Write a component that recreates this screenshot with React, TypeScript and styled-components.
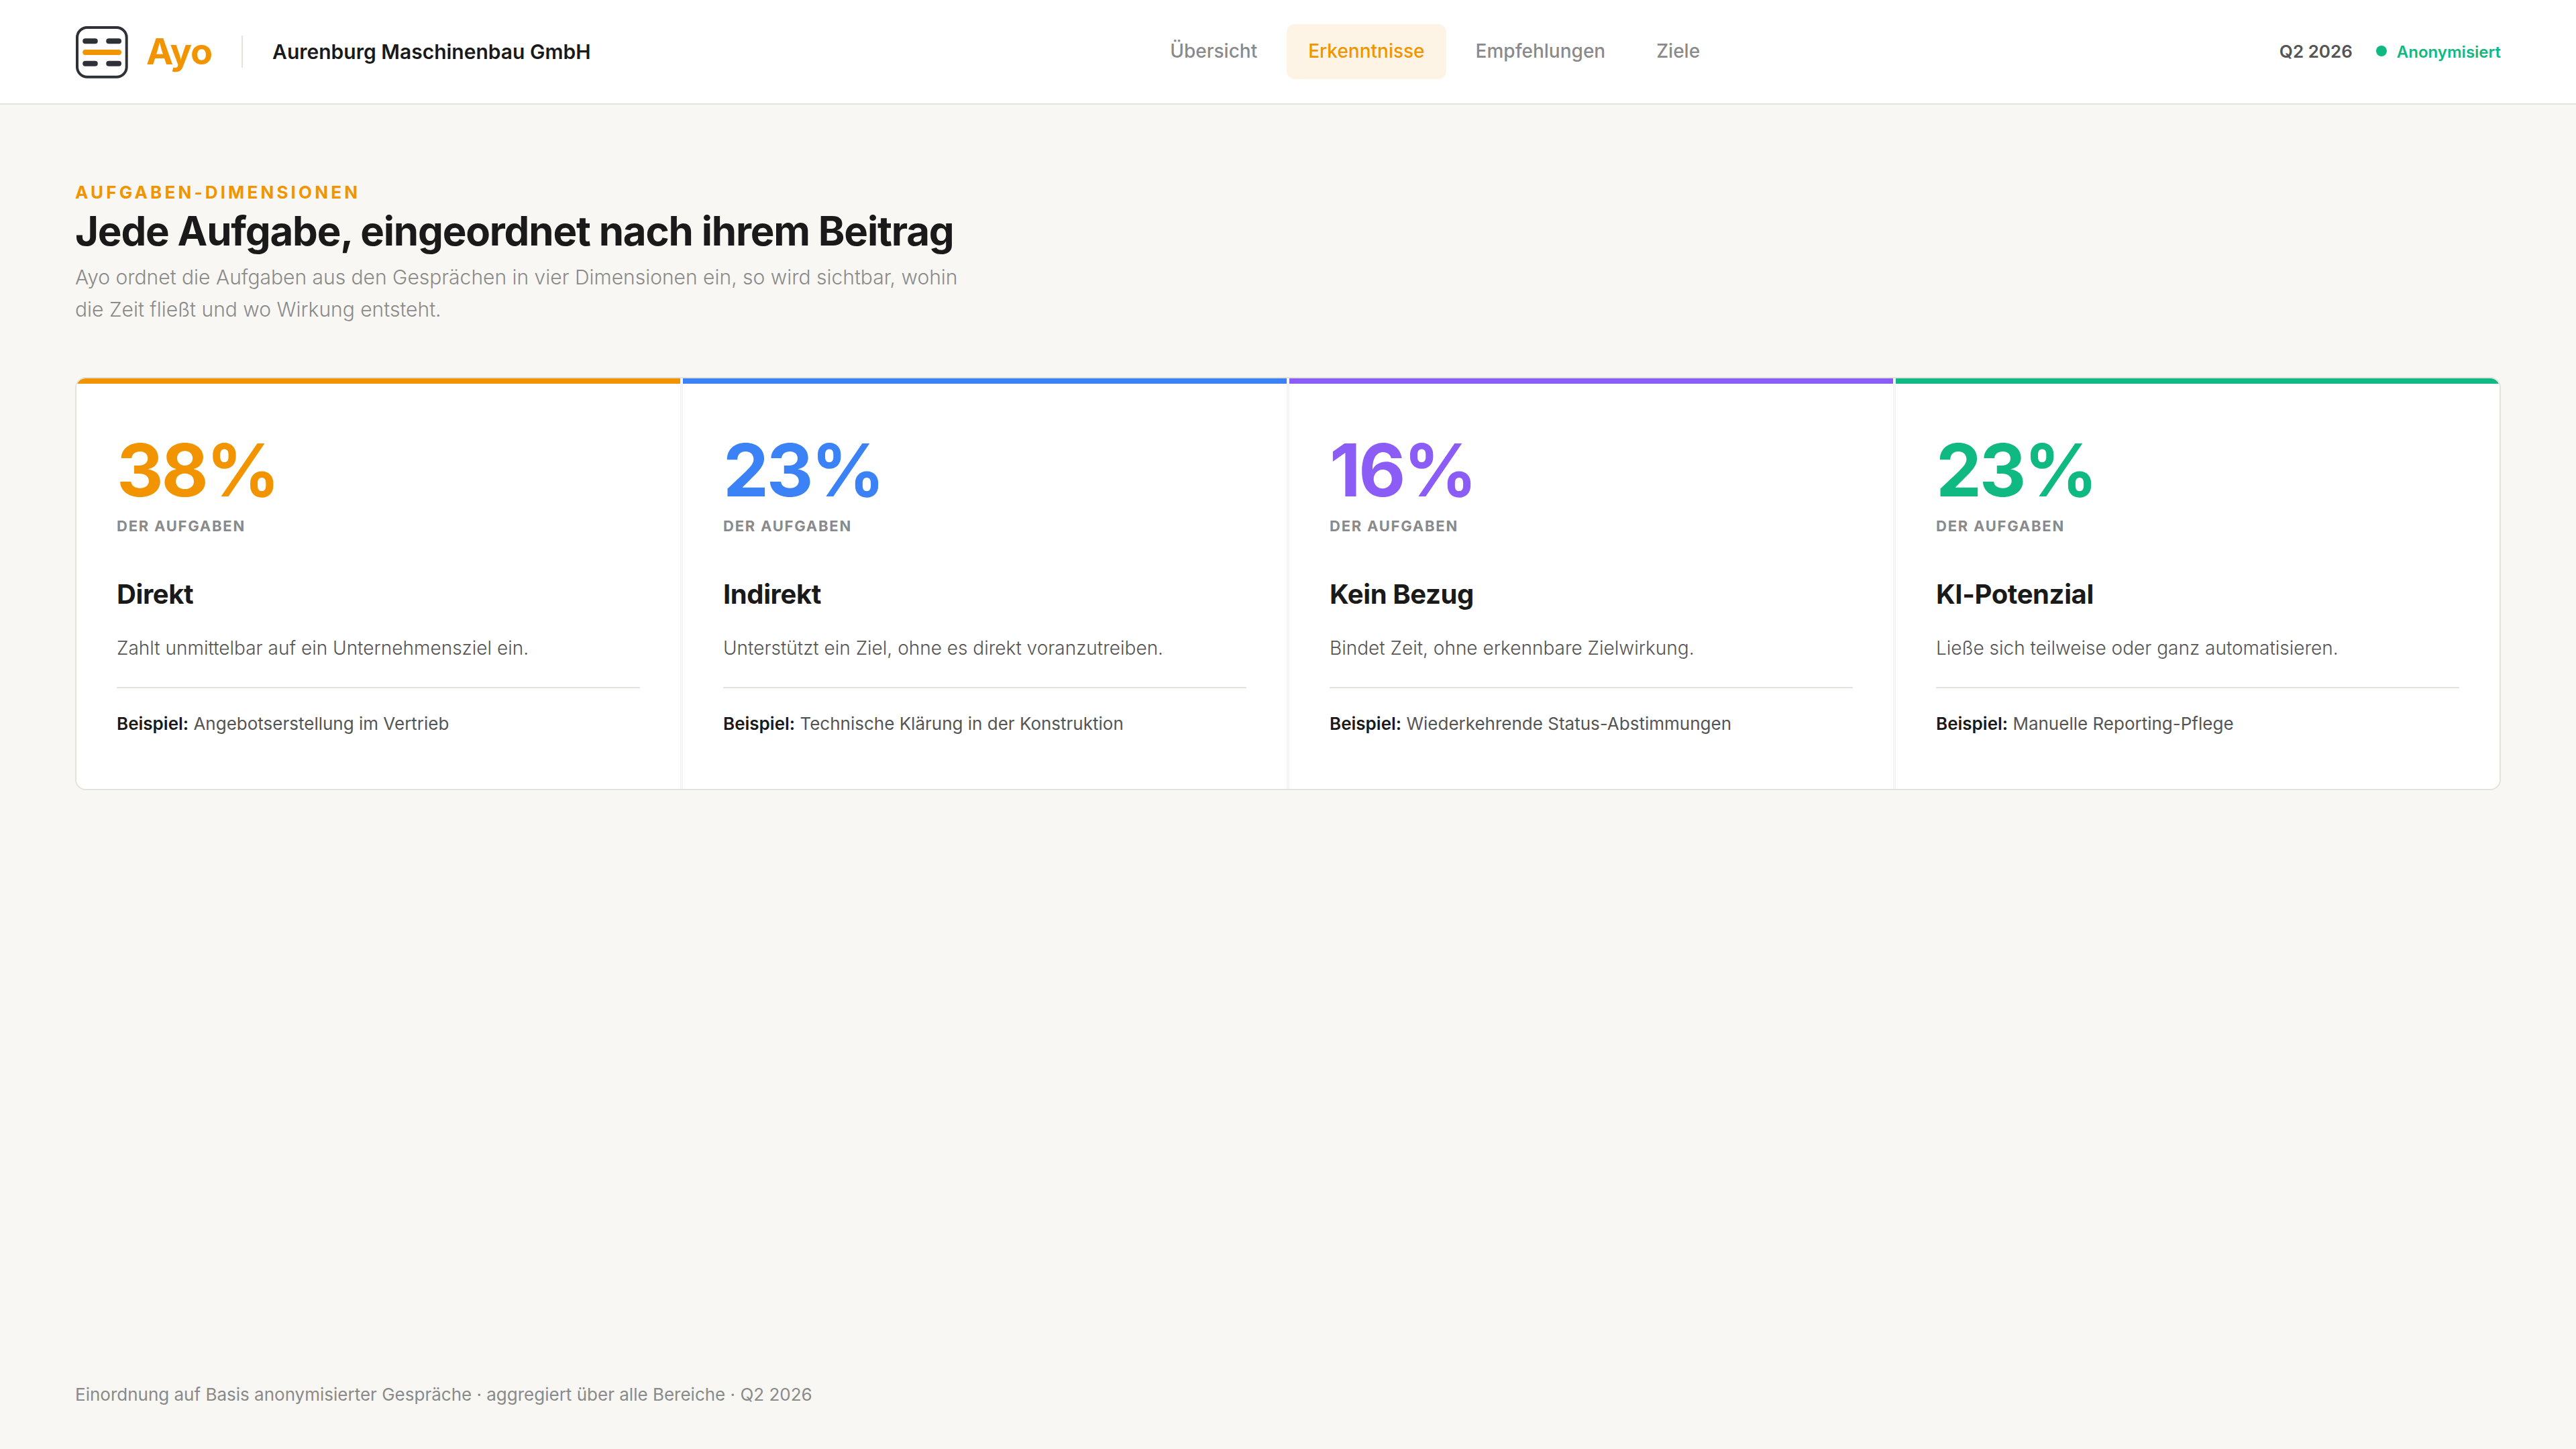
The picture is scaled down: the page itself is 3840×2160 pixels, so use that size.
import React from "react";
import styled, { createGlobalStyle } from "styled-components";

const GlobalStyle = createGlobalStyle`
  *, *::before, *::after { box-sizing: border-box; }
  body { margin: 0; background: #f8f7f3; }
`;

const Page = styled.div`
  display: flex;
  flex-direction: column;
  width: 100%;
  min-height: 100vh;
  background: #f8f7f3;
  color: #1a1a1a;
  font-family: Inter, "Liberation Sans", sans-serif;
  font-size: 28px;
  line-height: 1.5;
`;

const TopBar = styled.header`
  display: flex;
  align-items: center;
  justify-content: space-between;
  height: 156px;
  padding: 0 112px;
  background: #ffffff;
  border-bottom: 2px solid #e3e3dd;
`;

const Brand = styled.div`
  display: flex;
  align-items: center;
`;

const LogoMark = styled.svg`
  display: block;
  width: 80px;
  height: 80px;
`;

const Wordmark = styled.span`
  margin-left: 26px;
  font-size: 54px;
  line-height: 1;
  font-weight: 700;
  letter-spacing: -0.02em;
  color: #f29400;
`;

const BrandDivider = styled.span`
  width: 2px;
  height: 48px;
  margin: 0 44px;
  background: #e3e3dd;
`;

const Company = styled.span`
  font-size: 30px;
  font-weight: 600;
`;

const Nav = styled.nav`
  display: flex;
  gap: 12px;
`;

const NavItem = styled.a<{ $active?: boolean }>`
  padding: 19px 32px 21px;
  border-radius: 12px;
  font-size: 28px;
  font-weight: 500;
  color: ${(p) => (p.$active ? "#f29400" : "#8a8a8a")};
  background: ${(p) => (p.$active ? "#fef4e6" : "transparent")};
`;

const Meta = styled.div`
  display: flex;
  align-items: center;
  gap: 35px;
`;

const Period = styled.span`
  padding-bottom: 1px;
  font-size: 26px;
  font-weight: 600;
  color: #555555;
`;

const Status = styled.span`
  display: flex;
  align-items: center;
  gap: 15px;
  padding-top: 2px;
  font-size: 24px;
  font-weight: 600;
  color: #10b981;
`;

const StatusDot = styled.i`
  width: 16px;
  height: 16px;
  margin-bottom: 4px;
  border-radius: 50%;
  background: #10b981;
`;

const Content = styled.main`
  flex: 1;
  padding: 112px 112px 0;
`;

const Eyebrow = styled.div`
  font-size: 26px;
  line-height: 37px;
  font-weight: 700;
  letter-spacing: 0.16em;
  text-transform: uppercase;
  color: #f29400;
`;

const Title = styled.h1`
  margin: 0;
  font-size: 60px;
  line-height: 78px;
  font-weight: 700;
  letter-spacing: -0.02em;
`;

const Lead = styled.p`
  width: 1360px;
  margin: 6px 0 0;
  font-size: 30px;
  line-height: 48px;
  font-weight: 300;
  color: #8a8a8a;
`;

const Grid = styled.section`
  display: grid;
  grid-template-columns: repeat(4, 1fr);
  gap: 4px;
  margin-top: 77px;
  border: 2px solid #e3e3dd;
  border-radius: 16px;
  overflow: hidden;
  background: #f5f5f3;
`;

const Card = styled.article<{ $accent: string }>`
  height: 612px;
  padding: 75px 60px 0;
  border-top: 8px solid ${(p) => p.$accent};
  background: #ffffff;
`;

const Share = styled.div<{ $accent: string }>`
  font-size: 108px;
  line-height: 107px;
  font-weight: 700;
  letter-spacing: -0.03em;
  color: ${(p) => p.$accent};
`;

const ShareLabel = styled.div`
  margin-top: 13px;
  font-size: 22px;
  line-height: 34px;
  font-weight: 700;
  letter-spacing: 0.08em;
  text-transform: uppercase;
  color: #8a8a8a;
`;

const CardTitle = styled.h2`
  margin: 55px 0 0;
  font-size: 40px;
  line-height: 59px;
  font-weight: 700;
  letter-spacing: -0.01em;
`;

const Description = styled.p`
  margin: 29px 0 0;
  font-size: 28px;
  line-height: 44px;
  font-weight: 300;
  color: #555555;
`;

const Example = styled.p`
  margin: 36px 0 0;
  padding-top: 32px;
  border-top: 2px solid #e3e3dd;
  font-size: 26px;
  line-height: 41px;
  color: #555555;

  strong {
    font-weight: 600;
    color: #1a1a1a;
  }
`;

const Footnote = styled.footer`
  padding: 0 112px 62px;
  font-size: 26px;
  line-height: 39px;
  color: #8a8a8a;
`;

const navItems = ["Übersicht", "Erkenntnisse", "Empfehlungen", "Ziele"];

const dimensions = [
  { share: "38%", name: "Direkt", accent: "#f29400", text: "Zahlt unmittelbar auf ein Unternehmensziel ein.", example: "Angebotserstellung im Vertrieb" },
  { share: "23%", name: "Indirekt", accent: "#3b82f6", text: "Unterstützt ein Ziel, ohne es direkt voranzutreiben.", example: "Technische Klärung in der Konstruktion" },
  { share: "16%", name: "Kein Bezug", accent: "#8b5cf6", text: "Bindet Zeit, ohne erkennbare Zielwirkung.", example: "Wiederkehrende Status-Abstimmungen" },
  { share: "23%", name: "KI-Potenzial", accent: "#10b981", text: "Ließe sich teilweise oder ganz automatisieren.", example: "Manuelle Reporting-Pflege" },
];

function Logo() {
  return (
    <LogoMark viewBox="0 0 80 80" fill="none" aria-hidden="true">
      <rect x="3" y="4" width="73.7" height="73.7" rx="15" stroke="#2f3138" strokeWidth="4" />
      <g strokeWidth="8" strokeLinecap="round" stroke="#2f3138">
        <path d="M15.2 24.2H29.8M50.2 24.2H65M15.2 57.8H29.8M50.2 57.8H65" />
        <path d="M15.2 41H65" stroke="#f29400" />
      </g>
    </LogoMark>
  );
}

export default function App() {
  return (
    <Page>
      <GlobalStyle />
      <TopBar>
        <Brand>
          <Logo />
          <Wordmark>Ayo</Wordmark>
          <BrandDivider />
          <Company>Aurenburg Maschinenbau GmbH</Company>
        </Brand>
        <Nav>
          {navItems.map((item) => (
            <NavItem key={item} $active={item === "Erkenntnisse"}>{item}</NavItem>
          ))}
        </Nav>
        <Meta>
          <Period>Q2 2026</Period>
          <Status><StatusDot />Anonymisiert</Status>
        </Meta>
      </TopBar>
      <Content>
        <Eyebrow>Aufgaben-Dimensionen</Eyebrow>
        <Title>Jede Aufgabe, eingeordnet nach ihrem Beitrag</Title>
        <Lead>
          Ayo ordnet die Aufgaben aus den Gesprächen in vier Dimensionen ein, so wird sichtbar, wohin die Zeit fließt und wo Wirkung entsteht.
        </Lead>
        <Grid>
          {dimensions.map((d) => (
            <Card key={d.name} $accent={d.accent}>
              <Share $accent={d.accent}>{d.share}</Share>
              <ShareLabel>der Aufgaben</ShareLabel>
              <CardTitle>{d.name}</CardTitle>
              <Description>{d.text}</Description>
              <Example><strong>Beispiel:</strong> {d.example}</Example>
            </Card>
          ))}
        </Grid>
      </Content>
      <Footnote>Einordnung auf Basis anonymisierter Gespräche · aggregiert über alle Bereiche · Q2 2026</Footnote>
    </Page>
  );
}
